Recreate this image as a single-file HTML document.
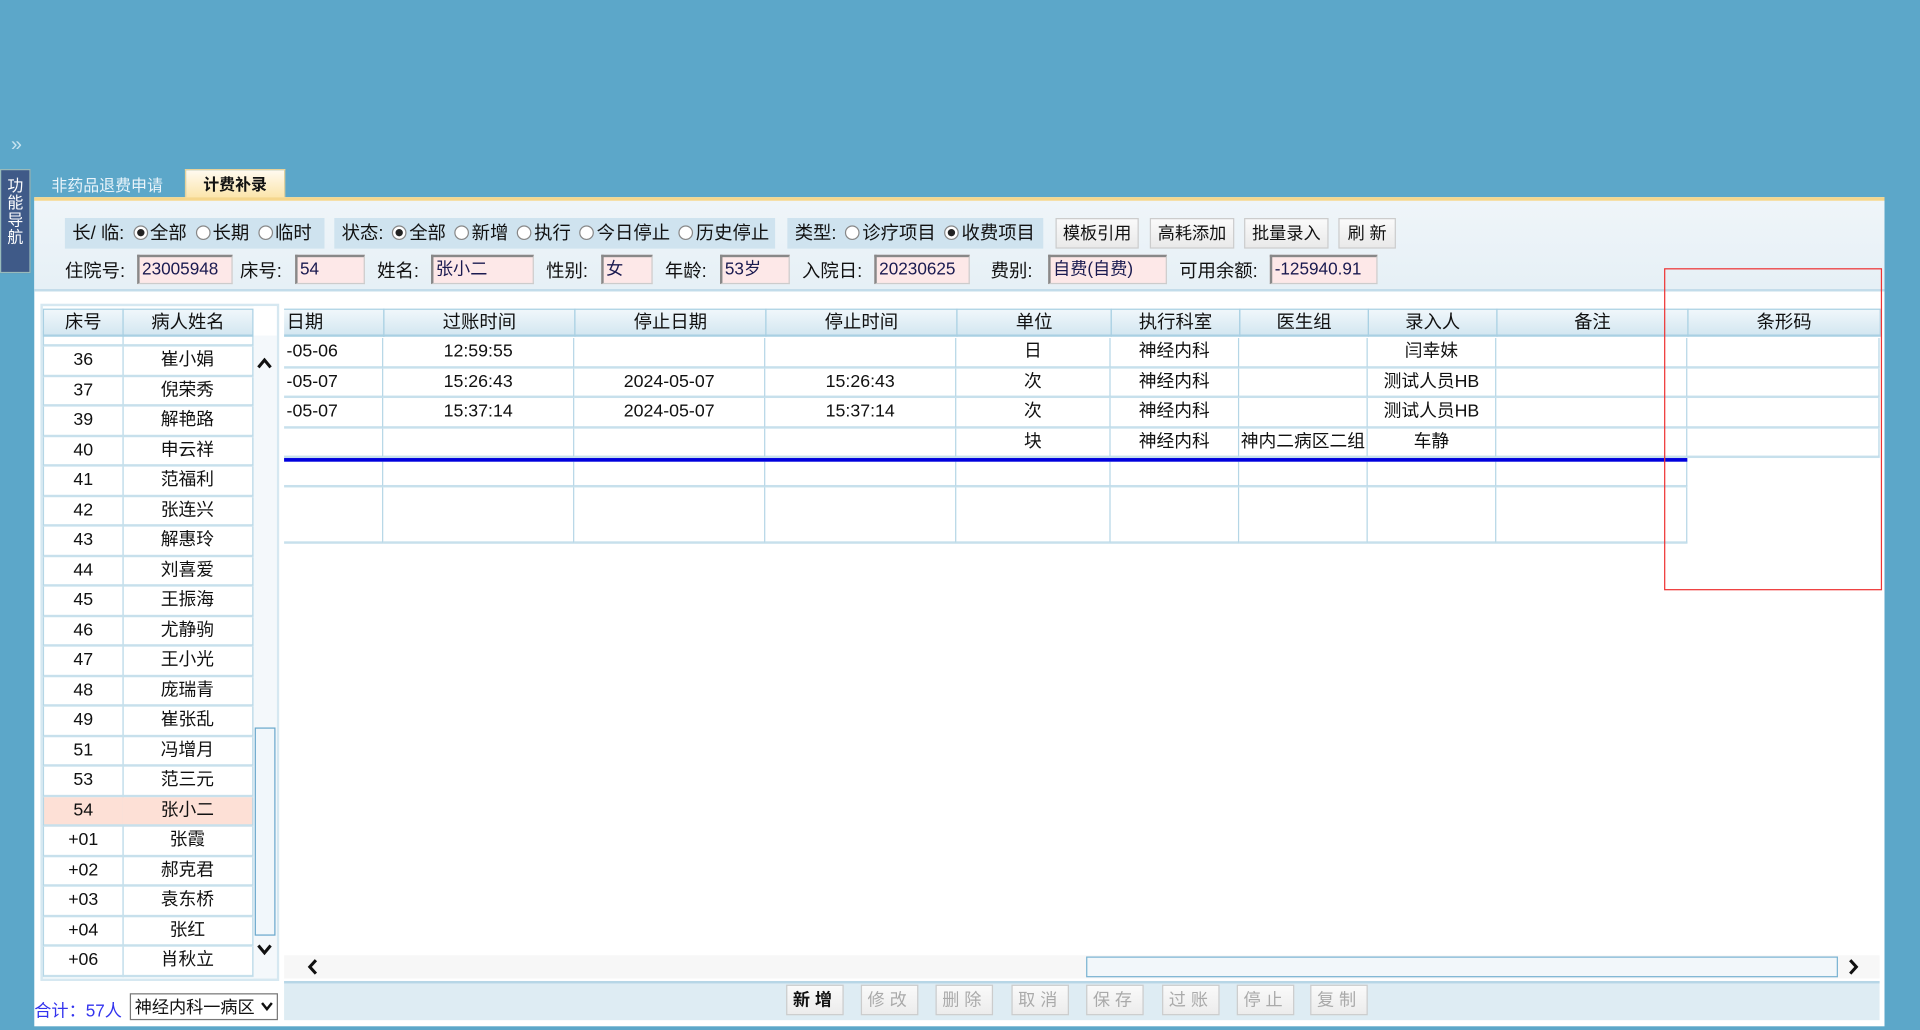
<!DOCTYPE html>
<html><head><meta charset="utf-8">
<style>
*{margin:0;padding:0;box-sizing:border-box}
html,body{width:1920px;height:1030px;overflow:hidden;background:#5ca7c9}
#s{position:absolute;left:0;top:0;width:1568px;height:841px;transform:scale(1.22449,1.2247);transform-origin:0 0;font-family:"Liberation Sans","Noto Sans CJK SC",sans-serif;font-size:14px;color:#111}
.a{position:absolute}
.grp{position:absolute;background:#cfe3ef;top:178px;height:25px;line-height:25px;padding-left:6px;white-space:nowrap;font-size:15px}
.r{display:inline-block;width:12px;height:12px;border:1px solid #888;border-radius:50%;background:#fff;vertical-align:-1px;margin:0 2px 0 7px;position:relative}
.r.on:after{content:"";position:absolute;left:2px;top:2px;width:6px;height:6px;border-radius:50%;background:#222}
.btn{position:absolute;top:178px;height:25px;line-height:23px;border:1px solid #ccc;background:linear-gradient(#fafafa,#e9e9e9);text-align:center;font-size:14px}
.lbl{position:absolute;top:212px;line-height:20px;font-size:15px}
.inp{position:absolute;top:208px;height:24px;background:#fde8e8;border:1px solid #ccc;border-top:2px solid #888;border-left:2px solid #888;color:#1a1a50;padding-left:2px;line-height:19px;font-size:14px}
.hd{position:absolute;top:252px;height:23px;line-height:22px;text-align:center;background:linear-gradient(#f0f7fb,#d4e7f1);border:1px solid #a9d0e3;border-bottom:2px solid #a9d0e3;font-size:15px}
.cell{position:absolute;text-align:center;border-right:1px solid #b5d6e6;border-bottom:2px solid #c7e0ec;line-height:23px;overflow:hidden;white-space:nowrap;font-size:14.5px}
.bb{position:absolute;top:804px;height:25px;width:47px;line-height:23px;border:1px solid #ccc;background:linear-gradient(#fafafa,#ececec);text-align:center;color:#aaa;letter-spacing:4px;font-size:14px}
</style></head><body><div id="s">
<div class="a" style="left:9px;top:110px;color:#c8e4f0;font-size:16px">»</div>
<div class="a" style="left:0;top:138px;width:25px;height:85px;background:#3f5a88;border:1px solid #9bb;color:#fff;font-size:13px;line-height:14px;text-align:center;padding-top:6px">功<br>能<br>导<br>航</div>
<div class="a" style="left:42px;top:141px;color:#eaf4fa;font-size:13px">非药品退费申请</div>
<div class="a" style="left:151px;top:138px;width:82px;height:25px;background:linear-gradient(#fffaf0,#fbe3a6);border:1px solid #e8d29a;border-bottom:none;text-align:center;line-height:24px;font-weight:bold;font-size:13px">计费补录</div>
<div class="a" style="left:28px;top:161px;width:1511px;height:677px;background:#fff;border-top:3px solid #f5d68c"></div>
<div class="a" style="left:28px;top:164px;width:1511px;height:74px;background:linear-gradient(#eff5f9,#e6f0f6);border-bottom:2px solid #c2dcea"></div>
<div class="grp" style="left:53px;width:212px">长/ 临:<span class="r on"></span>全部<span class="r"></span>长期<span class="r"></span>临时</div>
<div class="grp" style="left:273px;width:360px">状态:<span class="r on"></span>全部<span class="r"></span>新增<span class="r"></span>执行<span class="r"></span>今日停止<span class="r"></span>历史停止</div>
<div class="grp" style="left:643px;width:209px">类型:<span class="r"></span>诊疗项目<span class="r on"></span>收费项目</div>
<div class="btn" style="left:862px;width:68px">模板引用</div>
<div class="btn" style="left:939px;width:69px">高耗添加</div>
<div class="btn" style="left:1016px;width:69px">批量录入</div>
<div class="btn" style="left:1093px;width:47px">刷 新</div>
<div class="lbl" style="left:53px">住院号:</div><div class="inp" style="left:112px;width:78px">23005948</div>
<div class="lbl" style="left:196px">床号:</div><div class="inp" style="left:241px;width:57px">54</div>
<div class="lbl" style="left:308px">姓名:</div><div class="inp" style="left:352px;width:84px">张小二</div>
<div class="lbl" style="left:446px">性别:</div><div class="inp" style="left:491px;width:42px">女</div>
<div class="lbl" style="left:543px">年龄:</div><div class="inp" style="left:588px;width:57px">53岁</div>
<div class="lbl" style="left:655px">入院日:</div><div class="inp" style="left:714px;width:78px">20230625</div>
<div class="lbl" style="left:809px">费别:</div><div class="inp" style="left:856px;width:97px">自费(自费)</div>
<div class="lbl" style="left:963px">可用余额:</div><div class="inp" style="left:1037px;width:88px">-125940.91</div>

<div class="a" style="left:33px;top:248px;width:195px;height:553px;border:2px solid #d6e8f1;background:#fff"></div>
<div class="a" style="left:207px;top:250px;width:19px;height:549px;background:#f4f8fb"></div>
<div class="a" style="left:207px;top:250px;width:19px;height:24px;background:#fff"></div>
<div id="lst"></div>
<div class="hd" style="left:35px;width:66px">床号</div>
<div class="hd" style="left:100px;width:107px">病人姓名</div>
<svg class="a" style="left:210px;top:292px" width="12" height="10"><path d="M1 8 L6 2 L11 8" fill="none" stroke="#111" stroke-width="2.5"/></svg>
<div class="a" style="left:208px;top:594px;width:17px;height:170px;border:1px solid #6aa8cc;background:#f1f7fb"></div>
<svg class="a" style="left:210px;top:770px" width="12" height="10"><path d="M1 2 L6 8 L11 2" fill="none" stroke="#111" stroke-width="2.5"/></svg>
<div class="a" style="left:28px;top:815px;color:#3333ee;font-size:14px">合计：57人</div>
<div class="a" style="left:106px;top:811px;width:121px;height:22px;border:1px solid #777;background:#fff;line-height:20px;padding-left:3px;font-size:14px">神经内科一病区<svg style="position:absolute;right:3px;top:6px" width="10" height="8"><path d="M1 1 L5 6 L9 1" fill="none" stroke="#111" stroke-width="2"/></svg></div>

<div id="grd"></div>
<div class="a" style="left:232px;top:374px;width:1146px;height:3px;background:#0000dd"></div>
<div class="a" style="left:1359px;top:219px;width:178px;height:263px;border:1px solid #e33"></div>
<div class="a" style="left:232px;top:780px;width:1303px;height:19px;background:#f7f7f7"></div>
<svg class="a" style="left:250px;top:783px" width="10" height="13"><path d="M8 1 L3 6.5 L8 12" fill="none" stroke="#111" stroke-width="2.5"/></svg>
<div class="a" style="left:887px;top:781px;width:614px;height:17px;border:1px solid #7ab3d2;background:#f2f7fa"></div>
<svg class="a" style="left:1509px;top:783px" width="10" height="13"><path d="M2 1 L7 6.5 L2 12" fill="none" stroke="#111" stroke-width="2.5"/></svg>
<div class="a" style="left:232px;top:801px;width:1303px;height:32px;background:#deecf3;border-top:2px solid #b7d6e6"></div>
<div class="bb" style="left:642px;color:#111;font-weight:bold">新增</div>
<div class="bb" style="left:703px">修改</div>
<div class="bb" style="left:764px">删除</div>
<div class="bb" style="left:826px">取消</div>
<div class="bb" style="left:887px">保存</div>
<div class="bb" style="left:949px">过账</div>
<div class="bb" style="left:1010px">停止</div>
<div class="bb" style="left:1070px">复制</div>
</div>
<script>
var L=[["36","崔小娟"],["37","倪荣秀"],["39","解艳路"],["40","申云祥"],["41","范福利"],["42","张连兴"],["43","解惠玲"],["44","刘喜爱"],["45","王振海"],["46","尤静驹"],["47","王小光"],["48","庞瑞青"],["49","崔张乱"],["51","冯增月"],["53","范三元"],["54","张小二"],["+01","张霞"],["+02","郝克君"],["+03","袁东桥"],["+04","张红"],["+06","肖秋立"]];
var h='<div class="cell" style="left:35px;top:270px;width:66px;height:13px;border-left:1px solid #b5d6e6"></div><div class="cell" style="left:100px;top:270px;width:107px;height:13px"></div>';
for(var i=0;i<L.length;i++){var y=283+i*24.5,bg=L[i][0]=="54"?"background:#fde0d6;":"";
h+='<div class="cell" style="'+bg+'left:35px;top:'+y+'px;width:66px;height:24.5px;border-left:1px solid #b5d6e6">'+L[i][0]+'</div><div class="cell" style="'+bg+'left:100px;top:'+y+'px;width:107px;height:24.5px">'+L[i][1]+'</div>';}
document.getElementById('lst').innerHTML=h;
var C=[232,313,469,625,781,907,1012,1117,1222,1378,1535];
var H=["日期","过账时间","停止日期","停止时间","单位","执行科室","医生组","录入人","备注","条形码"];
var R=[["-05-06","12:59:55","","","日","神经内科","","闫幸妹","",""],["-05-07","15:26:43","2024-05-07","15:26:43","次","神经内科","","测试人员HB","",""],["-05-07","15:37:14","2024-05-07","15:37:14","次","神经内科","","测试人员HB","",""],["","","","","块","神经内科","神内二病区二组","车静","",""]];
var g='';
for(var c=0;c<10;c++){g+='<div class="hd" style="left:'+C[c]+'px;width:'+(C[c+1]-C[c]+1)+'px;'+(c==0?'text-align:left;border-left:none;padding-left:2px':'')+'">'+H[c]+'</div>';
for(var r=0;r<4;r++){g+='<div class="cell" style="left:'+C[c]+'px;top:'+(276+r*24.5)+'px;width:'+(C[c+1]-C[c])+'px;height:24.5px;'+(c==0?'text-align:left;padding-left:2px':'')+'">'+R[r][c]+'</div>';}
if(c<9){g+='<div class="cell" style="left:'+C[c]+'px;top:377px;width:'+(C[c+1]-C[c])+'px;height:21px"></div><div class="cell" style="left:'+C[c]+'px;top:398px;width:'+(C[c+1]-C[c])+'px;height:46px"></div>';}}
document.getElementById('grd').innerHTML=g;
</script>
</body></html>
